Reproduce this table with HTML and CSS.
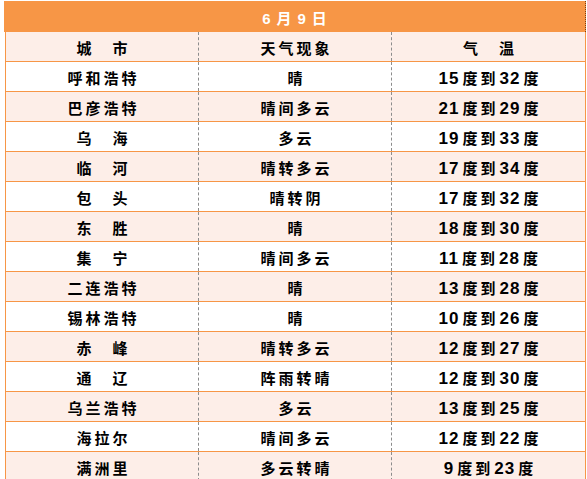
FILE: index.html
```html
<!DOCTYPE html>
<html lang="zh">
<head>
<meta charset="utf-8">
<title>6月9日</title>
<link rel="stylesheet" href="styles.css">
</head>
<body>
<div class="sheet">
  <div class="title">6月9日</div>
  <div class="grid">
    <div class="row head"><div class="cell">城　市</div><div class="cell">天气现象</div><div class="cell">气　温</div></div>
    <div class="row"><div class="cell">呼和浩特</div><div class="cell">晴</div><div class="cell"><span class="n">15</span>度到<span class="n m">32</span>度</div></div>
    <div class="row alt"><div class="cell">巴彦浩特</div><div class="cell">晴间多云</div><div class="cell"><span class="n">21</span>度到<span class="n m">29</span>度</div></div>
    <div class="row"><div class="cell">乌　海</div><div class="cell">多云</div><div class="cell"><span class="n">19</span>度到<span class="n m">33</span>度</div></div>
    <div class="row alt"><div class="cell">临　河</div><div class="cell">晴转多云</div><div class="cell"><span class="n">17</span>度到<span class="n m">34</span>度</div></div>
    <div class="row"><div class="cell">包　头</div><div class="cell">晴转阴</div><div class="cell"><span class="n">17</span>度到<span class="n m">32</span>度</div></div>
    <div class="row alt"><div class="cell">东　胜</div><div class="cell">晴</div><div class="cell"><span class="n">18</span>度到<span class="n m">30</span>度</div></div>
    <div class="row"><div class="cell">集　宁</div><div class="cell">晴间多云</div><div class="cell"><span class="n">11</span>度到<span class="n m">28</span>度</div></div>
    <div class="row alt"><div class="cell">二连浩特</div><div class="cell">晴</div><div class="cell"><span class="n">13</span>度到<span class="n m">28</span>度</div></div>
    <div class="row"><div class="cell">锡林浩特</div><div class="cell">晴</div><div class="cell"><span class="n">10</span>度到<span class="n m">26</span>度</div></div>
    <div class="row alt"><div class="cell">赤　峰</div><div class="cell">晴转多云</div><div class="cell"><span class="n">12</span>度到<span class="n m">27</span>度</div></div>
    <div class="row"><div class="cell">通　辽</div><div class="cell">阵雨转晴</div><div class="cell"><span class="n">12</span>度到<span class="n m">30</span>度</div></div>
    <div class="row alt"><div class="cell">乌兰浩特</div><div class="cell">多云</div><div class="cell"><span class="n">13</span>度到<span class="n m">25</span>度</div></div>
    <div class="row"><div class="cell">海拉尔</div><div class="cell">晴间多云</div><div class="cell"><span class="n">12</span>度到<span class="n m">22</span>度</div></div>
    <div class="row alt"><div class="cell">满洲里</div><div class="cell">多云转晴</div><div class="cell"><span class="n">9</span>度到<span class="n m">23</span>度</div></div>
  </div>
</div>
</body>
</html>
```
FILE: styles.css
```css
html, body {
  margin: 0;
  padding: 0;
  background: #ffffff;
}
.sheet {
  padding: 1px 0 0 4px;
  font-family: "Liberation Sans", "Noto Sans CJK SC", sans-serif;
  font-weight: 700;
  font-size: 15px;
  color: #000000;
}
.title {
  box-sizing: border-box;
  width: 582px;
  height: 31px;
  background: #f79646;
  color: #ffffff;
  display: flex;
  align-items: center;
  justify-content: center;
  letter-spacing: 6px;
  padding-left: 6px;
  padding-top: 1px;
  border-right: 1px dotted #7a3d10;
}
.grid {
  box-sizing: border-box;
  margin-left: 1px;
  width: 581px;
  border-left: 1px solid #f79646;
  border-right: 1px solid #f79646;
}
.row {
  box-sizing: border-box;
  display: grid;
  grid-template-columns: 193px 193px 193px;
  height: 30px;
  border-bottom: 1px solid #f79646;
  background: #ffffff;
}
.row.head,
.row.alt {
  background: #fdeee8;
}
.cell {
  box-sizing: border-box;
  display: flex;
  align-items: center;
  justify-content: center;
  letter-spacing: 3px;
  padding-left: 3px;
  padding-top: 3px;
  line-height: 1;
  white-space: nowrap;
}
.cell:nth-child(1),
.cell:nth-child(2) {
  border-right: 1px dashed #8c8c8c;
}
.n {
  font-size: 17px;
  letter-spacing: 1px;
  margin-right: 3px;
}
.n.m {
  margin-left: 1px;
}
```
